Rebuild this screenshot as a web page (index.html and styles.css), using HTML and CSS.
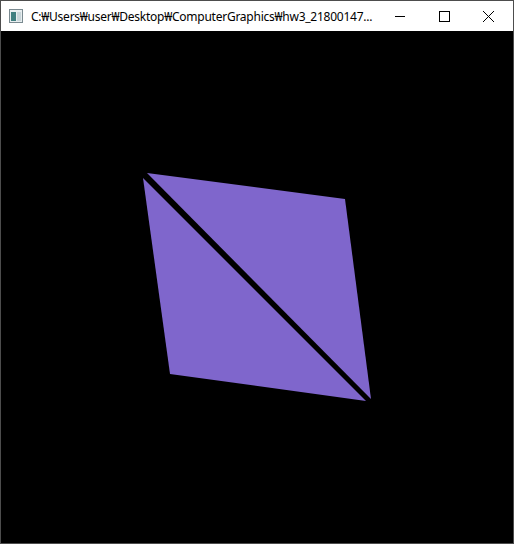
FILE: index.html
```html
<!DOCTYPE html>
<html>
<head>
<meta charset="utf-8">
<link rel="stylesheet" href="styles.css">
</head>
<body>
<div class="window">
  <div class="titlebar">
    <svg class="app-icon" width="14" height="14" viewBox="0 0 14 14">
      <rect x="0.5" y="0.5" width="13" height="13" fill="#e8eef0" stroke="#7a8a90"/>
      <rect x="2" y="3" width="5" height="9" fill="#3f7f80"/>
      <rect x="8" y="3" width="4" height="9" fill="#c9d6da"/>
    </svg>
    <span class="title">C:₩Users₩user₩Desktop₩ComputerGraphics₩hw3_21800147...</span>
    <div class="controls">
      <svg class="ctl" width="44" height="30" viewBox="0 0 44 30"><line x1="17" y1="15.5" x2="27" y2="15.5" stroke="#000" stroke-width="1"/></svg>
      <svg class="ctl" width="44" height="30" viewBox="0 0 44 30"><rect x="17.5" y="10.5" width="10" height="10" fill="none" stroke="#000" stroke-width="1"/></svg>
      <svg class="ctl" width="44" height="30" viewBox="0 0 44 30"><path d="M17 10 L28 21 M28 10 L17 21" stroke="#000" stroke-width="1"/></svg>
    </div>
  </div>
  <div class="canvas">
    <svg width="512" height="512" viewBox="1 31 512 512">
      <polygon points="147,173 345,199 371,399" fill="#7f66cc"/>
      <polygon points="143,178 170,374 366,401" fill="#7f66cc"/>
    </svg>
  </div>
</div>
</body>
</html>
```
FILE: styles.css
```css
html, body {
  margin: 0;
  padding: 0;
  background: #000;
}
.window {
  width: 514px;
  height: 544px;
  box-sizing: border-box;
  border: 1px solid #4d4d4d;
  background: #fff;
  display: flex;
  flex-direction: column;
}
.titlebar {
  height: 30px;
  display: flex;
  align-items: center;
  background: #fff;
}
.app-icon {
  margin-left: 8px;
  margin-right: 8px;
  flex: none;
}
.title {
  font-family: "Noto Sans", "Liberation Sans", sans-serif;
  font-size: 12px;
  color: #000;
  white-space: nowrap;
  flex: 1;
  letter-spacing: -0.25px;
}
.controls {
  display: flex;
  height: 30px;
  margin-right: 3px;
}
.ctl {
  display: block;
}
.canvas {
  flex: 1;
  background: #000;
}
.canvas svg {
  display: block;
}
```
